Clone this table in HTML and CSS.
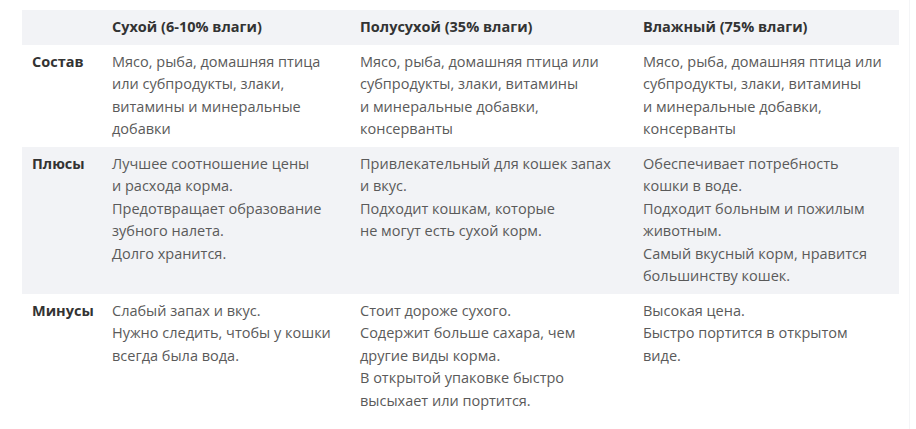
FILE: index.html
```html
<!DOCTYPE html>
<html lang="ru">
<head>
<meta charset="utf-8">
<link rel="stylesheet" href="styles.css">
</head>
<body>
<div class="wrap">
<table class="cmp">
  <colgroup>
    <col class="c0"><col class="c1"><col class="c2"><col class="c3">
  </colgroup>
  <thead>
    <tr class="shade">
      <th></th>
      <th>Сухой (6-10% влаги)</th>
      <th>Полусухой (35% влаги)</th>
      <th>Влажный (75% влаги)</th>
    </tr>
  </thead>
  <tbody>
    <tr>
      <th>Состав</th>
      <td>Мясо, рыба, домашняя птица<br>или субпродукты, злаки,<br>витамины и минеральные<br>добавки</td>
      <td>Мясо, рыба, домашняя птица или<br>субпродукты, злаки, витамины<br>и минеральные добавки,<br>консерванты</td>
      <td>Мясо, рыба, домашняя птица или<br>субпродукты, злаки, витамины<br>и минеральные добавки,<br>консерванты</td>
    </tr>
    <tr class="shade">
      <th>Плюсы</th>
      <td>Лучшее соотношение цены<br>и расхода корма.<br>Предотвращает образование<br>зубного налета.<br>Долго хранится.</td>
      <td>Привлекательный для кошек запах<br>и вкус.<br>Подходит кошкам, которые<br>не могут есть сухой корм.</td>
      <td>Обеспечивает потребность<br>кошки в воде.<br>Подходит больным и пожилым<br>животным.<br>Самый вкусный корм, нравится<br>большинству кошек.</td>
    </tr>
    <tr>
      <th>Минусы</th>
      <td>Слабый запах и вкус.<br>Нужно следить, чтобы у кошки<br>всегда была вода.</td>
      <td>Стоит дороже сухого.<br>Содержит больше сахара, чем<br>другие виды корма.<br>В открытой упаковке быстро<br>высыхает или портится.</td>
      <td>Высокая цена.<br>Быстро портится в открытом<br>виде.</td>
    </tr>
  </tbody>
</table>
</div>
</body>
</html>
```
FILE: styles.css
```css
html, body {
  margin: 0;
  padding: 0;
  background: #ffffff;
}
body {
  font-family: "Open Sans", "Liberation Sans", sans-serif;
  font-size: 14.5px;
  color: #595959;
}
.wrap {
  padding: 10px 0 0 22px;
  width: 910px;
  border-right: 1px solid #f4f5f7;
  height: 440px;
  box-sizing: border-box;
}
.cmp {
  border-collapse: collapse;
  table-layout: fixed;
  width: 877px;
}
.c0 { width: 80px; }
.c1 { width: 248px; }
.c2 { width: 283px; }
.c3 { width: 266px; }
.cmp th, .cmp td {
  padding: 6px 10px;
  line-height: 22.5px;
  vertical-align: top;
  text-align: left;
  white-space: nowrap;
}
.cmp th {
  font-weight: 700;
  color: #333333;
}
.cmp td {
  color: #5a5a5a;
}
.shade {
  background: #f2f3f6;
}
```
